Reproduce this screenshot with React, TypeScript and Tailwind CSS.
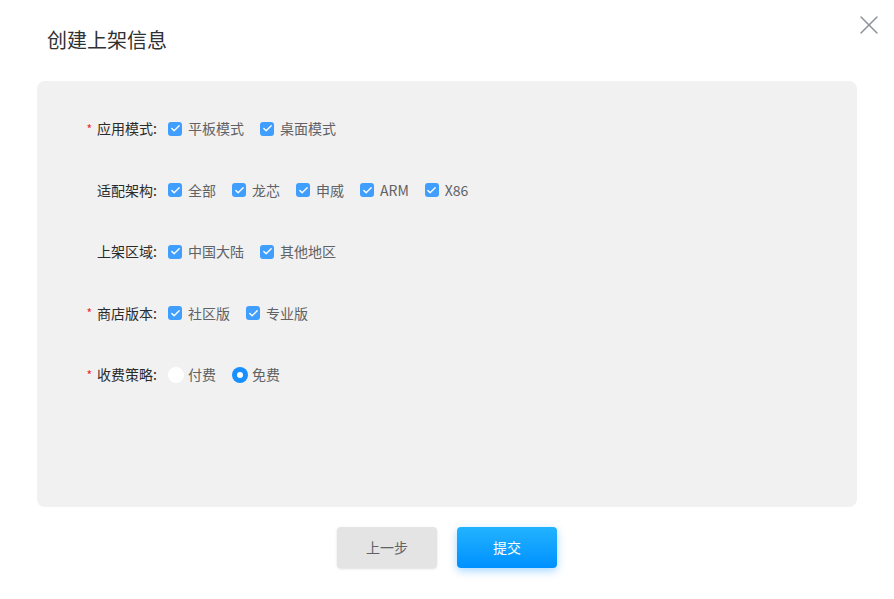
import { Check, X } from "lucide-react";

type Opt = { label: string; checked: boolean };
type Row = { label: string; required: boolean; kind: "checkbox" | "radio"; options: Opt[] };

const rows: Row[] = [
  {
    label: "应用模式:",
    required: true,
    kind: "checkbox",
    options: [
      { label: "平板模式", checked: true },
      { label: "桌面模式", checked: true },
    ],
  },
  {
    label: "适配架构:",
    required: false,
    kind: "checkbox",
    options: [
      { label: "全部", checked: true },
      { label: "龙芯", checked: true },
      { label: "申威", checked: true },
      { label: "ARM", checked: true },
      { label: "X86", checked: true },
    ],
  },
  {
    label: "上架区域:",
    required: false,
    kind: "checkbox",
    options: [
      { label: "中国大陆", checked: true },
      { label: "其他地区", checked: true },
    ],
  },
  {
    label: "商店版本:",
    required: true,
    kind: "checkbox",
    options: [
      { label: "社区版", checked: true },
      { label: "专业版", checked: true },
    ],
  },
  {
    label: "收费策略:",
    required: true,
    kind: "radio",
    options: [
      { label: "付费", checked: false },
      { label: "免费", checked: true },
    ],
  },
];

function CheckBox() {
  return (
    <span className="flex h-[14px] w-[14px] items-center justify-center rounded-[3px] bg-[#409eff]">
      <Check className="size-[11px] text-white" strokeWidth={3} />
    </span>
  );
}

function Radio({ checked }: { checked: boolean }) {
  return checked ? (
    <span className="flex h-4 w-4 items-center justify-center rounded-full bg-[#1890ff]">
      <span className="h-[6px] w-[6px] rounded-full bg-white" />
    </span>
  ) : (
    <span className="h-4 w-4 rounded-full bg-white" />
  );
}

export default function App() {
  return (
    <div
      className="relative h-[599px] w-[894px] bg-white"
      style={{ fontFamily: '"Noto Sans CJK SC", "Noto Sans", sans-serif' }}
    >
      <X className="absolute right-[9px] top-[9px] size-8 text-[#8c9099]" strokeWidth={1.1} />
      <div className="px-[47px] pt-[26px] text-[20px] leading-[28px] text-[#303133]">创建上架信息</div>
      <div className="mx-[37px] mt-[27px] h-[426px] rounded-lg bg-[#f1f1f1] pt-[17px]">
        {rows.map((row) => (
          <div key={row.label} className="flex h-[61.5px] items-center text-[14px]">
            <div className="flex w-[120px] items-center justify-end text-[#2b2b2b]">
              {row.required && <span className="mr-[5px] text-[12px] text-[#f5222d]">*</span>}
              <span>{row.label}</span>
            </div>
            <div className="ml-[11px] flex items-center">
              {row.options.map((o) => (
                <label
                  key={o.label}
                  className={`mr-4 flex items-center text-[#606266] ${row.kind === "checkbox" ? "gap-[6px]" : "gap-[4px]"}`}
                >
                  {row.kind === "checkbox" ? <CheckBox /> : <Radio checked={o.checked} />}
                  <span>{o.label}</span>
                </label>
              ))}
            </div>
          </div>
        ))}
      </div>
      <div className="mt-[20px] flex justify-center gap-5">
        <button className="h-[41px] w-[100px] rounded bg-[#e4e4e4] text-[14px] text-[#606266] shadow-sm">
          上一步
        </button>
        <button className="h-[41px] w-[100px] rounded bg-gradient-to-b from-[#22b3ff] to-[#0090ff] text-[14px] text-white shadow-[0_3px_8px_rgba(0,144,255,0.35)]">
          提交
        </button>
      </div>
    </div>
  );
}
